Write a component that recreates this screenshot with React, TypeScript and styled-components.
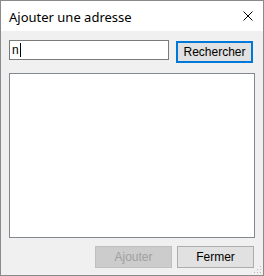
import React from 'react';
import styled, { createGlobalStyle } from 'styled-components';

const GlobalStyle = createGlobalStyle`
    html, body {
        margin: 0;
        padding: 0;
        background: #ffffff;
    }
    * {
        box-sizing: border-box;
    }
`;

const Window = styled.div`
    width: 264px;
    height: 276px;
    border: 1px solid #8a8a8a;
    display: flex;
    flex-direction: column;
    background: #f0f0f0;
    font-family: "Liberation Sans", Arial, sans-serif;
    position: relative;
`;

const TitleBar = styled.div`
    height: 30px;
    background: #ffffff;
    display: flex;
    align-items: center;
    justify-content: space-between;
    padding: 0 10px 0 8px;
`;

const Title = styled.span`
    font-family: "Noto Sans", "Liberation Sans", sans-serif;
    font-size: 13px;
    color: #000000;
    margin-top: 1px;
`;

const CloseIcon = styled.svg`
    width: 10px;
    height: 10px;
    display: block;
`;

const Body = styled.div`
    flex: 1;
    display: flex;
    flex-direction: column;
    padding: 9px 9px 0 8px;
`;

const SearchRow = styled.div`
    display: flex;
    align-items: flex-start;
    gap: 7px;
`;

const TextBox = styled.div`
    width: 160px;
    height: 20px;
    background: #ffffff;
    border: 1px solid #7a7a7a;
    display: flex;
    align-items: center;
    padding-left: 2px;
    font-size: 12px;
    color: #000000;
`;

const Caret = styled.span`
    display: inline-block;
    width: 1px;
    height: 14px;
    background: #000000;
    margin-left: 1px;
`;

const Button = styled.button<{ $primary?: boolean }>`
    width: 77px;
    height: 22px;
    margin: 0;
    padding: 0;
    font-family: "Liberation Sans", Arial, sans-serif;
    font-size: 12px;
    color: #000000;
    background: #e1e1e1;
    border: ${p => (p.$primary ? '2px solid #0078d7' : '1px solid #adadad')};
    margin-top: ${p => (p.$primary ? '1px' : '0')};

    &:disabled {
        background: #cccccc;
        border-color: #bfbfbf;
        color: #a0a0a0;
    }
`;

const ListBox = styled.div`
    margin-top: 10px;
    width: 246px;
    height: 165px;
    background: #ffffff;
    border: 1px solid #828790;
`;

const Footer = styled.div`
    display: flex;
    justify-content: flex-end;
    gap: 5px;
    margin-top: 8px;
`;

const Grip = styled.svg`
    position: absolute;
    right: 1px;
    bottom: 1px;
    width: 10px;
    height: 10px;
`;

export default function App() {
    return (
        <>
            <GlobalStyle />
            <Window>
                <TitleBar>
                    <Title>Ajouter une adresse</Title>
                    <CloseIcon viewBox="0 0 10 10">
                        <path d="M0.5 0.5 L9.5 9.5 M9.5 0.5 L0.5 9.5" stroke="#000" strokeWidth="1" fill="none" />
                    </CloseIcon>
                </TitleBar>
                <Body>
                    <SearchRow>
                        <TextBox>
                            n<Caret />
                        </TextBox>
                        <Button $primary>Rechercher</Button>
                    </SearchRow>
                    <ListBox />
                    <Footer>
                        <Button disabled>Ajouter</Button>
                        <Button>Fermer</Button>
                    </Footer>
                </Body>
                <Grip viewBox="0 0 10 10">
                    {[[8, 2], [8, 5], [5, 5], [8, 8], [5, 8], [2, 8]].map(([x, y], i) => (
                        <rect key={i} x={x} y={y} width="1" height="1" fill="#b8b8b8" />
                    ))}
                </Grip>
            </Window>
        </>
    );
}
